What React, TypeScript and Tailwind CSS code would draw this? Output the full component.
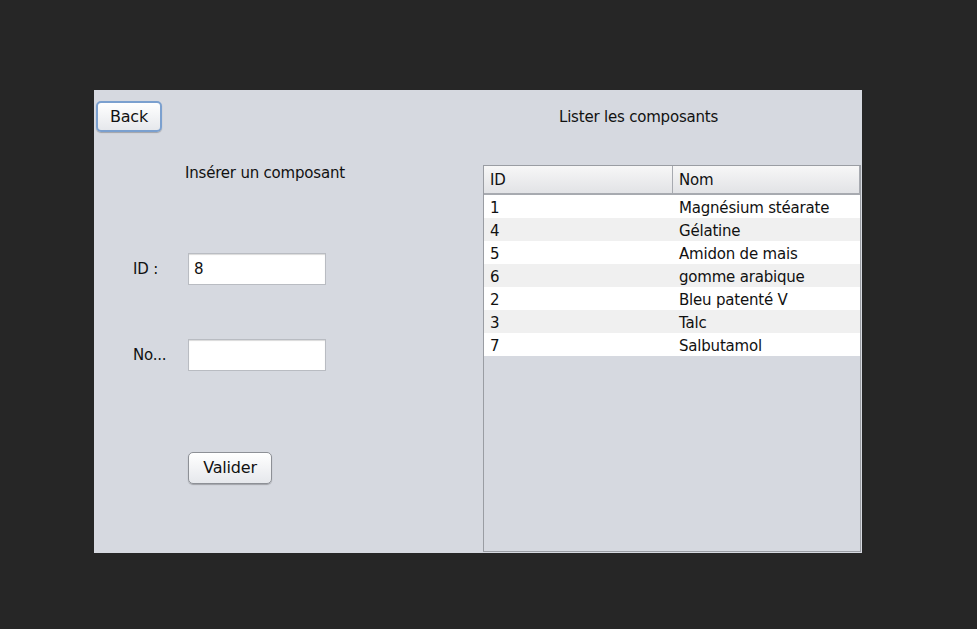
import React from "react";

const rows: [string, string][] = [
  ["1", "Magnésium stéarate"],
  ["4", "Gélatine"],
  ["5", "Amidon de mais"],
  ["6", "gomme arabique"],
  ["2", "Bleu patenté V"],
  ["3", "Talc"],
  ["7", "Salbutamol"],
];

const font = { fontFamily: '"DejaVu Sans", "Liberation Sans", sans-serif' };

export default function App() {
  return (
    <div className="w-full h-[629px] bg-[#262626] pt-[90px] pl-[94px]" style={font}>
      <div className="w-[768px] h-[463px] bg-[#d6d9e0] flex text-[#111] text-[15px] tracking-[-0.2px]">
        {/* Left column */}
        <div className="w-[389px] flex flex-col">
          <button className="ml-[2px] mt-[11px] w-[66px] h-[31px] rounded-[5px] border-2 border-[#7ba0cf] bg-gradient-to-b from-white to-[#e6e8ec] text-[16px] leading-none shadow-[0_1px_1px_rgba(0,0,0,0.25)]">
            Back
          </button>
          <div className="ml-[91px] mt-[30px] leading-[22px]">Insérer un composant</div>
          <div className="flex items-center mt-[69px]">
            <span className="ml-[39px] w-[55px]">ID :</span>
            <div className="w-[138px] h-[32px] bg-white border border-[#b9bcc2] shadow-[inset_0_1px_1px_rgba(0,0,0,0.15)] flex items-center pl-[5px]">
              8
            </div>
          </div>
          <div className="flex items-center mt-[54px]">
            <span className="ml-[39px] w-[55px]">No...</span>
            <div className="w-[138px] h-[32px] bg-white border border-[#b9bcc2] shadow-[inset_0_1px_1px_rgba(0,0,0,0.15)]" />
          </div>
          <button className="ml-[94px] mt-[81px] w-[84px] h-[32px] rounded-[5px] border border-[#8d9096] bg-gradient-to-b from-white to-[#e6e8ec] text-[16px] leading-none shadow-[0_1px_1px_rgba(0,0,0,0.25)]">
            Valider
          </button>
        </div>
        {/* Right column */}
        <div className="flex-1 flex flex-col">
          <div className="ml-[76px] mt-[16px] h-[22px] leading-[22px]">Lister les composants</div>
          <div className="mt-[37px] mr-[1px] h-[387px] border border-[#9a9da3] flex flex-col bg-[#d6d9e0]">
            <div className="flex h-[29px] bg-gradient-to-b from-[#f7f7f7] to-[#e2e3e6] border-b-2 border-[#a7aab0]">
              <div className="w-[189px] border-r border-[#a7aab0] pl-[6px] pt-[2px] flex items-center">ID</div>
              <div className="flex-1 pl-[6px] pt-[2px] flex items-center border-r border-[#a7aab0]">Nom</div>
            </div>
            {rows.map(([id, nom], i) => (
              <div
                key={id}
                className={`flex h-[23px] items-center pt-[4px] ${i % 2 === 0 ? "bg-white" : "bg-[#f0f0f0]"}`}
              >
                <div className="w-[189px] pl-[6px]">{id}</div>
                <div className="flex-1 pl-[6px]">{nom}</div>
              </div>
            ))}
          </div>
        </div>
      </div>
    </div>
  );
}
